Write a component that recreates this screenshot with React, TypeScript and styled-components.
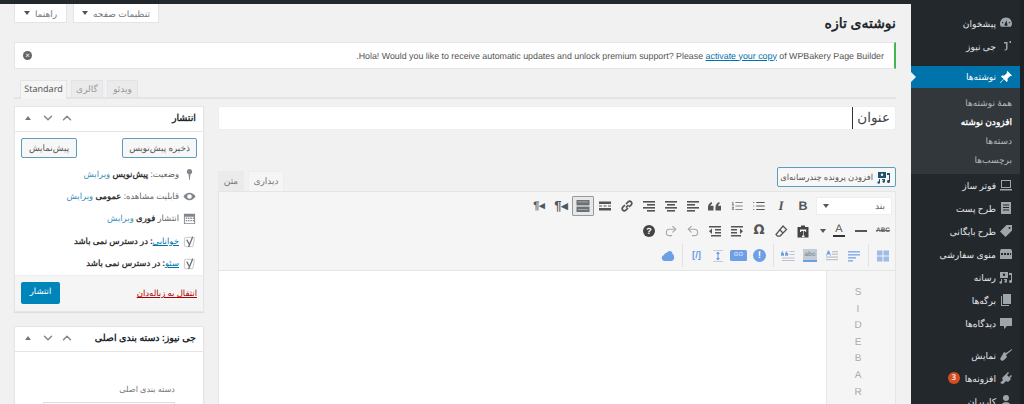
import React from "react";
import styled, { createGlobalStyle } from "styled-components";
import { LuChevronDown, LuChevronUp, LuList, LuListOrdered, LuRedo2, LuUndo2 } from "react-icons/lu";

const GlobalStyle = createGlobalStyle`
  html, body { margin: 0; padding: 0; height: 404px; overflow: hidden; background: #f1f1f1; }
  body {
    font-family: "Noto Sans", "Liberation Sans", sans-serif;
    font-size: 10px;
    color: #444;
    text-rendering: geometricPrecision;
  }
`;

const Page = styled.div`
  direction: rtl;
  display: flex;
  width: 1024px;
  height: 404px;
  overflow: hidden;
  background: #23282d;
`;

const Strip = styled.div`
  width: 4px;
  background: #1c2126;
`;

const Sidebar = styled.nav`
  width: 109px;
  padding-top: 12px;
  background: #23282d;
  flex: none;
`;

const MenuItem = styled.div<{ $active?: boolean; $gap?: number }>`
  box-sizing: border-box;
  display: flex;
  align-items: center;
  gap: 3px;
  height: ${({ $active }) => ($active ? 22 : 23)}px;
  margin-top: ${({ $gap }) => $gap ?? 0}px;
  padding: 0 7px 1px 0;
  font-size: 9.1px;
  font-weight: 500;
  background: ${({ $active }) => ($active ? "#0073aa" : "transparent")};
  color: ${({ $active }) => ($active ? "#fff" : "#e6e7e8")};
  position: relative;
  ${({ $active }) =>
    $active &&
    `&::after {
      content: "";
      position: absolute;
      left: 0;
      top: 6px;
      border: 5px solid transparent;
      border-left-color: #f1f1f1;
    }`}
`;

const MenuIcon = styled.svg<{ $fill?: string }>`
  width: 14px;
  height: 14px;
  fill: ${({ $fill }) => $fill ?? "#a0a5aa"};
  flex: none;
`;

const SubMenu = styled.div`
  background: #32373c;
  padding: 5px 0;
`;

const SubItem = styled.div<{ $current?: boolean }>`
  height: 19px;
  line-height: 19px;
  padding-right: 8px;
  font-size: 9px;
  font-weight: ${({ $current }) => ($current ? 700 : 400)};
  color: ${({ $current }) => ($current ? "#fff" : "#b4b9be")};
`;

const Badge = styled.span`
  width: 12px;
  height: 12px;
  margin-right: 2px;
  border-radius: 50%;
  background: #d54e21;
  color: #fff;
  font-size: 8px;
  line-height: 12px;
  text-align: center;
`;

const Main = styled.main`
  flex: 1;
  margin-top: 4px;
  background: #f1f1f1;
  padding: 0 15px 0 14px;
  min-width: 0;
`;

const ScreenMeta = styled.div`
  float: left;
  display: flex;
  gap: 6px;
  height: 19px;
`;

const MetaButton = styled.div<{ $width: number }>`
  width: ${({ $width }) => $width}px;
  box-sizing: border-box;
  display: flex;
  align-items: center;
  justify-content: center;
  gap: 5px;
  background: #fff;
  border: 1px solid #e2e4e7;
  border-top: 0;
  font-size: 9px;
  color: #72777c;
`;

const Caret = styled.span`
  width: 0;
  height: 0;
  border: 3px solid transparent;
  border-top: 4px solid #555;
  border-bottom: 0;
`;

const Title = styled.h1`
  margin: 0;
  padding: 11px 0 9px;
  line-height: 18px;
  font-size: 14px;
  font-weight: 700;
  color: #23282d;
`;

const Notice = styled.div`
  box-sizing: border-box;
  height: 27px;
  background: #fff;
  border: 1px solid #e5e5e5;
  border-right: 2px solid #46b450;
  padding: 0 10px 0 8px;
  display: flex;
  align-items: center;
  justify-content: space-between;
`;

const NoticeText = styled.p`
  margin: 0;
  font-family: "Liberation Sans", Arial, sans-serif;
  font-size: 8.85px;
  color: #555;
`;

const TextLink = styled.a<{ $plain?: boolean }>`
  color: #0073aa;
  text-decoration: underline;
  font-weight: ${({ $plain }) => ($plain ? 400 : "inherit")};
`;

const DismissIcon = styled.span`
  width: 9px;
  height: 9px;
  border-radius: 50%;
  background: #666;
  color: #fff;
  font-size: 8px;
  line-height: 9px;
  text-align: center;
  font-family: "Liberation Sans", sans-serif;
`;

const FormatTabs = styled.div`
  margin-top: 11px;
  height: 17px;
  display: flex;
  flex-direction: row-reverse;
  gap: 4px;
  padding-left: 6px;
  border-bottom: 2px solid #e2e4e7;
`;

const Tab = styled.div<{ $active?: boolean; $width: number }>`
  box-sizing: border-box;
  width: ${({ $width }) => $width}px;
  height: ${({ $active }) => ($active ? 19 : 17)}px;
  background: ${({ $active }) => ($active ? "#f5f5f5" : "#ebebeb")};
  border: 1px solid #e2e4e7;
  border-bottom: 0;
  color: ${({ $active }) => ($active ? "#555" : "#999")};
  font-size: 9px;
  text-align: center;
  line-height: 15px;
`;

const Columns = styled.div`
  margin-top: 7px;
  display: flex;
  gap: 14px;
  align-items: flex-start;
`;

const EditorColumn = styled.div`
  flex: 1;
  min-width: 0;
`;

const SideColumn = styled.aside`
  width: 190px;
  flex: none;
  display: flex;
  flex-direction: column;
  gap: 14px;
`;

const TitleInput = styled.div`
  box-sizing: border-box;
  height: 24px;
  background: #fff;
  border: 1px solid #eee;
  border-radius: 2px;
  padding-right: 5px;
  font-size: 13.5px;
  line-height: 21px;
  color: #444;
  display: flex;
`;

const Cursor = styled.span`
  display: block;
  border-left: 1px solid #333;
  padding-left: 4px;
  height: 22px;
`;

const EditorHead = styled.div`
  margin-top: 41px;
  height: 20px;
  display: flex;
  justify-content: space-between;
  align-items: flex-start;
`;

const MediaButton = styled.div`
  box-sizing: border-box;
  width: 119px;
  height: 20px;
  margin-top: -4px;
  border: 1px solid #5b9dbb;
  border-radius: 2px;
  background: #f7f7f7;
  display: flex;
  align-items: center;
  gap: 4px;
  padding-right: 4px;
  font-size: 8.4px;
  white-space: nowrap;
  color: #555;
`;

const EditorTabs = styled.div`
  display: flex;
  gap: 4px;
`;

const EditorTab = styled.div<{ $active?: boolean; $width: number }>`
  box-sizing: border-box;
  width: ${({ $width }) => $width}px;
  height: 20px;
  background: ${({ $active }) => ($active ? "#f5f5f5" : "#ebebeb")};
  border: 1px solid ${({ $active }) => ($active ? "#eee" : "#ebebeb")};
  border-bottom: 0;
  font-size: 9px;
  line-height: 18px;
  text-align: center;
  color: #777;
`;

const Editor = styled.div`
  border: 1px solid #e5e5e5;
  background: #fff;
  height: 214px;
`;

const Toolbar = styled.div`
  box-sizing: border-box;
  height: 79px;
  padding-top: 1px;
  background: #f5f5f5;
  border-bottom: 1px solid #e5e5e5;
`;

const ToolRow = styled.div`
  height: 25px;
  display: flex;
  align-items: center;
  padding-right: 1px;
`;

const FormatSelect = styled.div`
  box-sizing: border-box;
  width: 76px;
  height: 18px;
  margin: 0 2px 0 2px;
  background: #fff;
  border: 1px solid #eee;
  display: flex;
  align-items: center;
  justify-content: space-between;
  padding: 0 6px;
  font-size: 9px;
  color: #666;
`;

const ToolButton = styled.span<{ $pressed?: boolean; $color?: string; $width?: number }>`
  box-sizing: border-box;
  width: ${({ $width }) => $width ?? 22}px;
  height: 20px;
  flex: none;
  display: inline-flex;
  align-items: center;
  justify-content: center;
  color: ${({ $color }) => $color ?? "#555"};
  border: 1px solid ${({ $pressed }) => ($pressed ? "#999" : "transparent")};
  border-radius: 1px;
  background: ${({ $pressed }) => ($pressed ? "#e8e8e8" : "transparent")};
  svg { width: 14px; height: 14px; }
`;

const CaretSlot = styled.span`
  width: 14px;
  flex: none;
  display: flex;
  justify-content: flex-start;
  padding-right: 2px;
  box-sizing: border-box;
`;

const BoldGlyph = styled.span`
  font: 700 12.5px "Liberation Sans", sans-serif;
`;

const ItalicGlyph = styled.span`
  font: italic 700 13px "Liberation Serif", serif;
`;

const OmegaGlyph = styled.span`
  font: 700 13px "DejaVu Sans", sans-serif;
`;

const ParaGlyph = styled.span<{ $size: number }>`
  direction: ltr;
  font: 700 ${({ $size }) => $size}px "Liberation Sans", sans-serif;
  color: #50575e;
`;

const StrikeGlyph = styled.span`
  font: 700 6.5px "Liberation Sans", sans-serif;
  text-decoration: line-through;
  color: #666;
`;

const ColorGlyph = styled.span`
  font: 400 11px/11px "Liberation Sans", sans-serif;
  border-bottom: 2px solid #32373c;
  padding: 0 2px;
  color: #555;
`;

const Dash = styled.span`
  width: 12px;
  height: 2px;
  background: #555;
`;

const HelpDot = styled.span<{ $bg: string; $size: number }>`
  width: ${({ $size }) => $size}px;
  height: ${({ $size }) => $size}px;
  border-radius: 50%;
  background: ${({ $bg }) => $bg};
  color: #fff;
  font: 700 ${({ $size }) => $size - 3}px/${({ $size }) => $size}px "Liberation Sans", sans-serif;
  text-align: center;
`;

const GoChip = styled.span`
  width: 17px;
  height: 11px;
  border-radius: 1.5px;
  background: #6e9ee6;
  color: #c9dcf8;
  font: 700 6px/11px "Liberation Sans", sans-serif;
  text-align: center;
`;

const CodeGlyph = styled.span`
  direction: ltr;
  font: 700 9.5px "Liberation Sans", sans-serif;
  color: #6e9ee6;
`;

const AbcChip = styled.span`
  width: 14px;
  height: 11px;
  background: #c4ccd6;
  border-bottom: 2px solid #6e9ee6;
  color: #8792a0;
  font: 700 6.5px/11px "Liberation Sans", sans-serif;
  text-align: center;
`;

const ToolDivider = styled.span`
  width: 1px;
  height: 23px;
  flex: none;
  margin: 0 3px;
  background: #e2e2e2;
`;

const EditArea = styled.div`
  display: flex;
  height: 134px;
`;

const VerticalBar = styled.div`
  width: 69px;
  flex: none;
  box-sizing: border-box;
  padding: 14px 6px 0 0;
  background: #f5f5f5;
  border-left: 1px solid #e8e8e8;
  display: flex;
  flex-direction: column;
  align-items: center;
  font-family: "Liberation Sans", sans-serif;
  font-size: 10px;
  line-height: 16.6px;
  color: #aaa;
`;

const Postbox = styled.section`
  background: #fff;
  border: 1px solid #e5e5e5;
  box-shadow: 0 1px 1px rgba(0, 0, 0, 0.08);
`;

const BoxHeader = styled.header`
  box-sizing: border-box;
  height: 25px;
  display: flex;
  align-items: center;
  justify-content: space-between;
  padding: 0 7px 2px;
  border-bottom: 1px solid #e5e5e5;
  font-size: 9.5px;
  font-weight: 700;
  line-height: 16px;
  color: #23282d;
`;

const BoxControls = styled.div`
  direction: ltr;
  display: flex;
  align-items: center;
  gap: 5px;
  color: #82878c;
  svg { width: 14px; height: 14px; }
`;

const TriUp = styled.span`
  width: 0;
  height: 0;
  margin: 0 5px 0 3px;
  border: 3px solid transparent;
  border-bottom: 4px solid #72777c;
  border-top: 0;
`;

const BoxBody = styled.div`
  padding: 6px 6px 0;
`;

const ActionRow = styled.div`
  display: flex;
  justify-content: space-between;
  margin-bottom: 5px;
`;

const OutlineButton = styled.div<{ $width: number }>`
  box-sizing: border-box;
  width: ${({ $width }) => $width}px;
  height: 20px;
  border: 1px solid #5b9dbb;
  border-radius: 2px;
  background: #f7f7f7;
  text-align: center;
  font-size: 8.8px;
  line-height: 18px;
  color: #555;
`;

const MetaRow = styled.div`
  height: 22.4px;
  display: flex;
  align-items: center;
  gap: 4px;
  padding-right: 1px;
  font-size: 8.5px;
  color: #666;
  svg { width: 13px; height: 13px; flex: none; fill: #82878c; }
  b { color: #333; }
`;

const MetaLink = styled.a`
  color: #3d8fb8;
`;

const BoxFooter = styled.div`
  box-sizing: border-box;
  height: 36px;
  background: #f5f5f5;
  border-top: 1px solid #eee;
  display: flex;
  align-items: center;
  justify-content: space-between;
  padding: 0 6px;
`;

const TrashLink = styled.a`
  color: #a00;
  font-size: 8.5px;
  text-decoration: underline;
`;

const PublishButton = styled.div`
  width: 39px;
  height: 22px;
  border-radius: 2px;
  background: #0085ba;
  color: #fff;
  font-size: 8.5px;
  line-height: 20px;
  text-align: center;
`;

const FieldLabel = styled.div`
  margin: 31px 28px 5px 0;
  line-height: 14px;
  font-size: 8.2px;
  color: #777;
`;

const SelectStub = styled.div`
  height: 30px;
  margin: 0 28px;
  background: #fff;
  border: 1px solid #ddd;
`;

const dashboard = "M7 1.500a6 6 0 0 0-5 9.300h10A6 6 0 0 0 7 1.500zM7.500 4.500 8.300 8a1.400 1.400 0 1 1-2.600 0zM3 6h1.200v1.200H3zM9.800 6H11v1.200H9.800z";
const pin = "M8.500 1 13 5.500l-1 .8-.8-.3-2.700 2.700.2 2.300-1 1L5 9.300 1.500 13 1 12.500 4.700 9 2 6.400l1-1 2.300.2L8 2.900 7.700 2z";
const footer = "M2 2h10v8H2zM3 3v6h8V3zM1 11h12v1.500H1z";
const doc = "M2 1h10v12H2zM4 3.500v1h6v-1zm0 2.500v1h6V6zm0 2.500v1h6v-1z";
const tag = "M7.500 1H13v5.500L6.500 13 1 7.500zM10.500 3a1 1 0 1 0 0 2 1 1 0 0 0 0-2z";
const grid = "M1 4h12v8H1zM2 2h10l1 2H1zM2 6v2h2V6zm3 0v2h2V6zm3 0v2h2V6zm3 0v2h1V6z";
const media = "M1 2h8v6H1zM5 3.500a1.200 1.200 0 1 0 0 2.400 1.200 1.200 0 0 0 0-2.400zM10 3h3v8.500a1.500 1.500 0 1 1-1-1.400V5h-2zM2 9h1v3.500a1.300 1.300 0 1 1-1-1.300zM5 9h3v2.500a1.300 1.300 0 1 1-1-1.300V10H5z";
const pages = "M4 1h8v10H4zM2 3h1v9h7v1H2z";
const bubble = "M1 2h12v8H8l-3 3v-3H1z";
const brush = "M13 1 7 5 5 4 1 11l2 2 2-1 3-3-1-2 6-5z";
const plug = "M9 1l1 1-2 2 2 2 2-2 1 1-2 2 1 1-3 3-2-1-3 3-3-1 3-3-1-2 3-3z";
const user = "M7 1a3 3 0 1 1 0 6 3 3 0 0 1 0-6zM2 13c0-3 2-5 5-5s5 2 5 5z";
const news = "M5 3h3.500v6.500a2 2 0 0 1-2 2H5.500V10.500H6a1 1 0 0 0 1-1V4.500H5zM10.500 2H12v2h-1.500z";
const BLUE = "#6e9ee6";

const Icon = ({ d, fill }: { d: string; fill?: string }) => (
  <MenuIcon viewBox="0 0 14 14" $fill={fill}>
    <path d={d} fillRule="evenodd" />
  </MenuIcon>
);

// text-align style icon: one bar per entry, [x, width] in a 14 grid
const LinesIcon = ({ bars, color = "currentColor" }: { bars: number[][]; color?: string }) => (
  <svg viewBox="0 0 14 14">
    {bars.map(([x, w], i) => (
      <rect key={i} x={x} y={2 + i * 3} width={w} height={1.6} fill={color} />
    ))}
  </svg>
);

const QuoteMarks = ({ x = 0, scale = 1 }: { x?: number; scale?: number }) => (
  <g transform={`translate(${x} 3) scale(${scale})`} fill="currentColor">
    <path d="M0 5.500C0 2.500 1.500.8 4 0v1.800C3 2.300 2.500 3 2.500 3.800H5.500V8.500H0z" />
    <path d="M7.500 5.500C7.500 2.500 9 .8 11.500 0v1.800c-1 .5-1.500 1.200-1.500 2h3v4.700H7.500z" />
  </g>
);

const YoastIcon = () => (
  <svg viewBox="0 0 14 14">
    <path d="M11.500 2.500H3.500a2 2 0 0 0-2 2v6a2 2 0 0 0 2 2h7l2-10" fill="none" stroke="#c3c4c7" strokeWidth="1" />
    <path d="M4 5l3 5.500M10.500 2 6 13" fill="none" stroke="#6b7075" strokeWidth="1.400" />
  </svg>
);

const BoxHead = ({ children }: { children: React.ReactNode }) => (
  <BoxHeader>
    <span>{children}</span>
    <BoxControls>
      <TriUp />
      <LuChevronDown strokeWidth={2.5} />
      <LuChevronUp strokeWidth={2.5} />
    </BoxControls>
  </BoxHeader>
);

const App = () => {
  return (
    <Page>
      <GlobalStyle />
      <Strip />
      <Sidebar>
        <MenuItem>
          <Icon d={dashboard} />
          پیشخوان
        </MenuItem>
        <MenuItem>
          <Icon d={news} />
          جی نیوز
        </MenuItem>
        <MenuItem $active $gap={8}>
          <Icon d={pin} fill="#fff" />
          نوشته‌ها
        </MenuItem>
        <SubMenu>
          <SubItem>همهٔ نوشته‌ها</SubItem>
          <SubItem $current>افزودن نوشته</SubItem>
          <SubItem>دسته‌ها</SubItem>
          <SubItem>برچسب‌ها</SubItem>
        </SubMenu>
        <MenuItem>
          <Icon d={footer} />
          فوتر ساز
        </MenuItem>
        <MenuItem>
          <Icon d={doc} />
          طرح پست
        </MenuItem>
        <MenuItem>
          <Icon d={tag} />
          طرح بایگانی
        </MenuItem>
        <MenuItem>
          <Icon d={grid} />
          منوی سفارشی
        </MenuItem>
        <MenuItem>
          <Icon d={media} />
          رسانه
        </MenuItem>
        <MenuItem>
          <Icon d={pages} />
          برگه‌ها
        </MenuItem>
        <MenuItem>
          <Icon d={bubble} />
          دیدگاه‌ها
        </MenuItem>
        <MenuItem $gap={9}>
          <Icon d={brush} />
          نمایش
        </MenuItem>
        <MenuItem>
          <Icon d={plug} />
          افزونه‌ها
          <Badge>3</Badge>
        </MenuItem>
        <MenuItem>
          <Icon d={user} />
          کاربران
        </MenuItem>
      </Sidebar>
      <Main>
        <ScreenMeta>
          <MetaButton $width={86}>
            تنظیمات صفحه <Caret />
          </MetaButton>
          <MetaButton $width={53}>
            راهنما <Caret />
          </MetaButton>
        </ScreenMeta>
        <Title>نوشته‌ی تازه</Title>
        <Notice>
          <NoticeText>
            Hola! Would you like to receive automatic updates and unlock premium support? Please{" "}
            <TextLink>activate your copy</TextLink> of WPBakery Page Builder<span>.</span>
          </NoticeText>
          <DismissIcon>×</DismissIcon>
        </Notice>
        <FormatTabs>
          <Tab $active $width={47}>Standard</Tab>
          <Tab $width={32}>گالری</Tab>
          <Tab $width={31}>ویدئو</Tab>
        </FormatTabs>
        <Columns>
          <EditorColumn>
            <TitleInput>
              <Cursor>عنوان</Cursor>
            </TitleInput>
            <EditorHead>
              <MediaButton>
                <Icon d={media} fill="#23506b" />
                افزودن پرونده چندرسانه‌ای
              </MediaButton>
              <EditorTabs>
                <EditorTab $active $width={36}>دیداری</EditorTab>
                <EditorTab $width={26}>متن</EditorTab>
              </EditorTabs>
            </EditorHead>
            <Editor>
              <Toolbar>
                <ToolRow>
                  <FormatSelect>
                    بند <Caret />
                  </FormatSelect>
                  <ToolButton><BoldGlyph>B</BoldGlyph></ToolButton>
                  <ToolButton><ItalicGlyph>I</ItalicGlyph></ToolButton>
                  <ToolButton><LuList /></ToolButton>
                  <ToolButton $color="#888"><LuListOrdered /></ToolButton>
                  <ToolButton>
                    <svg viewBox="0 0 14 14"><QuoteMarks /></svg>
                  </ToolButton>
                  <ToolButton><LinesIcon bars={[[1, 12], [1, 8], [1, 12], [1, 8]]} /></ToolButton>
                  <ToolButton><LinesIcon bars={[[1, 12], [3, 8], [1, 12], [3, 8]]} /></ToolButton>
                  <ToolButton><LinesIcon bars={[[1, 12], [5, 8], [1, 12], [5, 8]]} /></ToolButton>
                  <ToolButton>
                    <svg viewBox="0 0 14 14" fill="none" stroke="currentColor" strokeWidth="1.700">
                      <path d="M6 8.500l2.500-2.500M5 6 2.800 8.200a2.100 2.100 0 0 0 3 3L8 9M9 8l2.200-2.200a2.100 2.100 0 0 0-3-3L6 5" />
                    </svg>
                  </ToolButton>
                  <ToolButton>
                    <svg viewBox="0 0 14 14" fill="currentColor">
                      <rect x="1" y="2.500" width="12" height="2.500" />
                      <rect x="1" y="6.500" width="3" height="1" />
                      <rect x="5.500" y="6.500" width="3" height="1" />
                      <rect x="10" y="6.500" width="3" height="1" />
                      <rect x="1" y="9" width="12" height="2.500" />
                    </svg>
                  </ToolButton>
                  <ToolButton $pressed $color="#6b7075">
                    <svg viewBox="0 0 14 14" fill="currentColor">
                      <rect x="0.500" y="1" width="13" height="5" />
                      <rect x="2" y="2.500" width="10" height="0.800" fill="#b5b8bb" />
                      <rect x="0.500" y="6.600" width="13" height="0.800" />
                      <rect x="0.500" y="8" width="13" height="5" />
                      <rect x="2" y="10" width="10" height="0.800" fill="#b5b8bb" />
                    </svg>
                  </ToolButton>
                  <ToolButton><ParaGlyph $size={13}>¶◂</ParaGlyph></ToolButton>
                  <ToolButton><ParaGlyph $size={11}>¶◂</ParaGlyph></ToolButton>
                </ToolRow>
                <ToolRow>
                  <ToolButton><StrikeGlyph>ABC</StrikeGlyph></ToolButton>
                  <ToolButton><Dash /></ToolButton>
                  <ToolButton><ColorGlyph>A</ColorGlyph></ToolButton>
                  <CaretSlot><Caret /></CaretSlot>
                  <ToolButton>
                    <svg viewBox="0 0 14 14" fill="#444">
                      <path fillRule="evenodd" d="M1.500 3H5V1.500h4V3h3.500v10.500h-11zM4 5.500V8h1.200V7h2v4.500H6V13h2.500v-1.500H7.800V7h1.400v1h1V5.500z" />
                    </svg>
                  </ToolButton>
                  <ToolButton>
                    <svg viewBox="0 0 14 14" fill="none" stroke="#555" strokeWidth="1.300">
                      <path d="M9 2l3.500 3.500L6 12l-2.500.2L2 10.500z" />
                      <path d="M5.500 5.500l3.500 3.500" />
                    </svg>
                  </ToolButton>
                  <ToolButton><OmegaGlyph>Ω</OmegaGlyph></ToolButton>
                  <ToolButton>
                    <svg viewBox="0 0 14 14" fill="currentColor">
                      <rect x="1" y="2" width="12" height="1.500" />
                      <rect x="1" y="5" width="6" height="1.500" />
                      <rect x="1" y="8" width="6" height="1.500" />
                      <rect x="1" y="11" width="10" height="1.500" />
                      <path d="M10 4.500l3 2.750-3 2.750z" />
                    </svg>
                  </ToolButton>
                  <ToolButton>
                    <svg viewBox="0 0 14 14" fill="currentColor">
                      <rect x="1" y="2" width="12" height="1.500" />
                      <rect x="7" y="5" width="6" height="1.500" />
                      <rect x="7" y="8" width="6" height="1.500" />
                      <rect x="3" y="11" width="10" height="1.500" />
                      <path d="M4 4.500l-3 2.750 3 2.750z" />
                    </svg>
                  </ToolButton>
                  <ToolButton $color="#aaa"><LuUndo2 /></ToolButton>
                  <ToolButton $color="#aaa"><LuRedo2 /></ToolButton>
                  <ToolButton><HelpDot $bg="#444" $size={12}>?</HelpDot></ToolButton>
                </ToolRow>
                <ToolRow>
                  <ToolButton $color="#9dbcea">
                    <svg viewBox="0 0 14 14" fill="currentColor">
                      <rect x="1" y="1.500" width="5.500" height="5" />
                      <rect x="7.500" y="1.500" width="5.500" height="5" />
                      <rect x="1" y="7.500" width="5.500" height="5" />
                      <rect x="7.500" y="7.500" width="5.500" height="5" />
                    </svg>
                  </ToolButton>
                  <ToolDivider />
                  <ToolButton $color="#8fb3ea"><LinesIcon bars={[[1, 12], [1, 12], [1, 8], [1, 5]]} /></ToolButton>
                  <ToolButton $color="#b9c2cd">
                    <svg viewBox="0 0 14 14" fill="currentColor">
                      <rect x="7" y="2" width="6" height="1.200" />
                      <rect x="7" y="4.500" width="6" height="1.200" />
                      <rect x="1" y="7.500" width="12" height="1.200" />
                      <rect x="1" y="10" width="12" height="1.200" />
                      <path d="M1 6.500l2-5h1l2 5H5l-.5-1.300h-2L2 6.500z" fill={BLUE} />
                    </svg>
                  </ToolButton>
                  <ToolButton><AbcChip>abc</AbcChip></ToolButton>
                  <ToolButton $color={BLUE}>
                    <svg viewBox="0 0 14 14">
                      <g transform="translate(0 2) scale(0.55)" fill={BLUE}>
                        <path d="M0 5.500C0 2.500 1.500.8 4 0v1.800C3 2.300 2.500 3 2.500 3.800H5.500V8.500H0z" />
                        <path d="M7.500 5.500C7.500 2.500 9 .8 11.500 0v1.800c-1 .5-1.500 1.200-1.500 2h3v4.700H7.500z" />
                      </g>
                      <rect x="8.500" y="2" width="5" height="1" fill="#b9c2cd" />
                      <rect x="8.500" y="5" width="5" height="1" fill="#b9c2cd" />
                      <rect x="1" y="8.500" width="12.500" height="1" fill="#b9c2cd" />
                      <rect x="1" y="11" width="12.500" height="1" fill="#b9c2cd" />
                    </svg>
                  </ToolButton>
                  <ToolDivider />
                  <ToolButton $width={21}><HelpDot $bg={BLUE} $size={13}>!</HelpDot></ToolButton>
                  <ToolButton $width={21}><GoChip>GO</GoChip></ToolButton>
                  <ToolButton $width={21} $color={BLUE}>
                    <svg viewBox="0 0 14 14" fill="currentColor">
                      <rect x="2" y="1" width="10" height="0.800" fill="#b9c2cd" />
                      <rect x="2" y="12.200" width="10" height="0.800" fill="#b9c2cd" />
                      <rect x="6.400" y="3" width="1.200" height="8" />
                      <path d="M7 2.500l2 2.500H5zM7 11.500l2-2.500H5z" />
                    </svg>
                  </ToolButton>
                  <ToolButton $width={21}><CodeGlyph>[/]</CodeGlyph></ToolButton>
                  <ToolDivider />
                  <ToolButton $color={BLUE}>
                    <svg viewBox="0 0 14 14" fill="currentColor">
                      <path d="M3.500 12a3 3 0 0 1-.5-5.900A3.500 3.500 0 0 1 6 3.500a3.200 3.200 0 0 1 2.500-1.500 3 3 0 0 1 3 3 2.800 2.800 0 0 1 1.500 2.800A3.200 3.200 0 0 1 10 12z" />
                    </svg>
                  </ToolButton>
                </ToolRow>
              </Toolbar>
              <EditArea>
                <VerticalBar>
                  {"SIDEBAR".split("").map((letter, i) => (
                    <span key={i}>{letter}</span>
                  ))}
                </VerticalBar>
              </EditArea>
            </Editor>
          </EditorColumn>
          <SideColumn>
            <Postbox>
              <BoxHead>انتشار</BoxHead>
              <BoxBody>
                <ActionRow>
                  <OutlineButton $width={75}>ذخیره پیش‌نویس</OutlineButton>
                  <OutlineButton $width={56}>پیش‌نمایش</OutlineButton>
                </ActionRow>
                <MetaRow>
                  <svg viewBox="0 0 14 14"><path d="M7 1a3 3 0 0 1 1 5.800L7.300 13h-.6L6 6.800A3 3 0 0 1 7 1z" /></svg>
                  <span>وضعیت: <b>پیش‌نویس</b> <MetaLink>ویرایش</MetaLink></span>
                </MetaRow>
                <MetaRow>
                  <svg viewBox="0 0 14 14"><path fillRule="evenodd" d="M7 3c3 0 5.500 2 6.500 4-1 2-3.500 4-6.500 4S1.500 9 .5 7c1-2 3.500-4 6.500-4zm0 1.500a2.500 2.500 0 1 0 0 5 2.500 2.500 0 0 0 0-5z" /></svg>
                  <span>قابلیت مشاهده: <b>عمومی</b> <MetaLink>ویرایش</MetaLink></span>
                </MetaRow>
                <MetaRow>
                  <svg viewBox="0 0 14 14"><path fillRule="evenodd" d="M1 2h12v11H1zM2 5v7h10V5zm1 1h1.500v1.500H3zm2.500 0H7v1.500H5.500zM8 6h1.500v1.500H8zm2.500 0H12v1.500h-1.500zM3 8.500h1.500V10H3zm2.500 0H7V10H5.500zm2.500 0h1.500V10H8zm2.500 0H12V10h-1.500z" /></svg>
                  <span>انتشار <b>فوری</b> <MetaLink>ویرایش</MetaLink></span>
                </MetaRow>
                <MetaRow>
                  <YoastIcon />
                  <b><TextLink $plain>خوانایی</TextLink>: در دسترس نمی باشد</b>
                </MetaRow>
                <MetaRow>
                  <YoastIcon />
                  <b><TextLink $plain>سئو</TextLink>: در دسترس نمی باشد</b>
                </MetaRow>
              </BoxBody>
              <BoxFooter>
                <TrashLink>انتقال به زباله‌دان</TrashLink>
                <PublishButton>انتشار</PublishButton>
              </BoxFooter>
            </Postbox>
            <Postbox>
              <BoxHead>جی نیوز: دسته بندی اصلی</BoxHead>
              <FieldLabel>دسته بندی اصلی</FieldLabel>
              <SelectStub />
            </Postbox>
          </SideColumn>
        </Columns>
      </Main>
    </Page>
  );
};

export default App;
